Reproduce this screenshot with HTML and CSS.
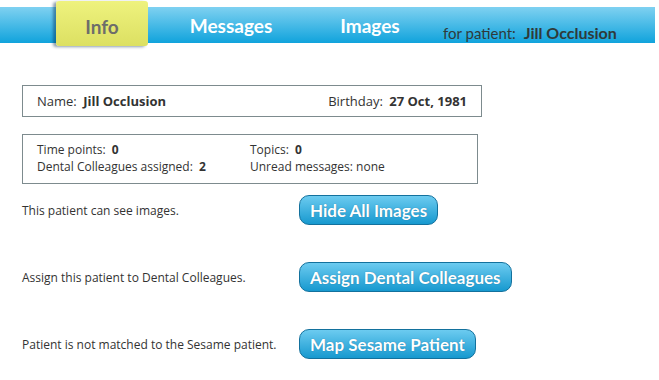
FILE: index.html
```html
<!DOCTYPE html>
<html lang="en">
<head>
  <meta charset="UTF-8">
  <title>Patient Info</title>
  <link rel="stylesheet" href="styles.css">
</head>
<body>
    <div class="header">
        <a class="tab tab-info active">Info</a>
        <a class="tab tab-messages">Messages</a>
        <a class="tab tab-images">Images</a>
        <div class="for-patient">for patient: <b>Jill Occlusion</b></div>
    </div>

    <div class="content">
        <div class="box name-box">
            <div>Name: <b>Jill Occlusion</b></div>
            <div>Birthday: <b>27 Oct, 1981</b></div>
        </div>

        <div class="box stats-box">
            <div class="stats-col">
                <div>Time points: <b>0</b></div>
                <div>Dental Colleagues assigned: <b>2</b></div>
            </div>
            <div class="stats-col">
                <div>Topics: <b>0</b></div>
                <div>Unread messages: none</div>
            </div>
        </div>

        <div class="action-row first">
            <div class="action-text">This patient can see images.</div>
            <button class="blue-button">Hide All Images</button>
        </div>
        <div class="action-row">
            <div class="action-text">Assign this patient to Dental Colleagues.</div>
            <button class="blue-button">Assign Dental Colleagues</button>
        </div>
        <div class="action-row">
            <div class="action-text">Patient is not matched to the Sesame patient.</div>
            <button class="blue-button">Map Sesame Patient</button>
        </div>
    </div>
</body>
</html>
```

FILE: styles.css
```css
body {
    margin: 0;
    background-color: white;
    font-family: "Open Sans", sans-serif;
    font-size: 12px;
    color: #333;
}
.header {
    display: flex;
    align-items: center;
    margin-top: 7px;
    margin-right: 4px;
    height: 36px;
    background: linear-gradient(#7fd1f1, #10a3dc);
}
.tab {
    font-family: Lato, sans-serif;
    font-weight: bold;
    font-size: 19px;
    color: white;
    text-align: center;
}
.tab-info {
    margin-left: 56px;
    width: 92px;
    height: 39px;
    margin-top: -6px;
    margin-bottom: -3px;
    padding-top: 6px;
    line-height: 40px;
    color: #6d6d6a;
    background: linear-gradient(#eef27e, #dce062);
    border-radius: 3px;
    box-shadow: -3px 1px 3px rgba(0, 40, 80, 0.45);
}
.tab-messages {
    width: 166px;
}
.tab-images {
    width: 112px;
}
.for-patient {
    margin-left: 17px;
    margin-top: 14px;
    font-family: Lato, sans-serif;
    font-size: 15px;
    color: #2f3a3a;
}
.for-patient b {
    margin-left: 4px;
    font-size: 16px;
}
.content {
    padding-left: 22px;
    padding-top: 42px;
}
.box {
    display: flex;
    border: 1px solid #7d8b8e;
    box-sizing: border-box;
}
.name-box {
    width: 460px;
    height: 32px;
    align-items: center;
    justify-content: space-between;
    padding: 0 14px 0 14px;
    font-size: 13px;
}
.name-box b {
    margin-left: 3px;
}
.stats-box {
    width: 456px;
    height: 50px;
    margin-top: 17px;
    padding: 6px 14px 0 14px;
    line-height: 17px;
}
.stats-col {
    width: 214px;
}
.stats-col b {
    margin-left: 3px;
}
.action-row {
    display: flex;
    align-items: center;
    margin-top: 37px;
}
.action-row.first {
    margin-top: 11px;
}
.action-text {
    width: 277px;
}
.blue-button {
    height: 30px;
    padding: 0 10px;
    font-family: Lato, sans-serif;
    font-weight: bold;
    font-size: 17px;
    color: white;
    background: linear-gradient(#6ccbf0, #1799cf);
    border: 1px solid #13719d;
    border-radius: 10px;
    text-shadow: 0 0 1px rgba(0, 60, 100, 0.5);
}
```
